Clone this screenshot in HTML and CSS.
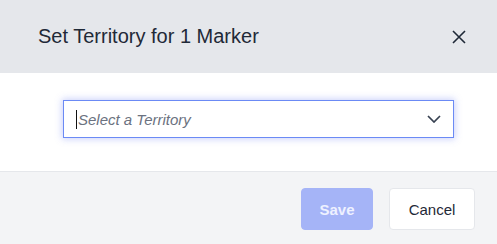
FILE: index.html
```html
<!DOCTYPE html>
<html>
<head>
<meta charset="utf-8">
<link rel="stylesheet" href="styles.css">
</head>
<body>
<div class="modal">
  <div class="modal-header">
    <h2 class="modal-title">Set Territory for 1 Marker</h2>
    <button class="close-btn" aria-label="Close">
      <svg width="14" height="14" viewBox="0 0 14 14"><path d="M1 1L13 13M13 1L1 13" stroke="#1f2937" stroke-width="1.6" fill="none"/></svg>
    </button>
  </div>
  <div class="modal-body">
    <div class="select">
      <span class="caret"></span>
      <span class="placeholder">Select a Territory</span>
      <svg class="chevron" width="14" height="8" viewBox="0 0 14 8"><path d="M1 1L7 7L13 1" stroke="#374151" stroke-width="1.7" fill="none"/></svg>
    </div>
  </div>
  <div class="modal-footer">
    <button class="btn btn-save">Save</button>
    <button class="btn btn-cancel">Cancel</button>
  </div>
</div>
</body>
</html>
```
FILE: styles.css
```css
html, body {
  margin: 0;
  padding: 0;
  background: #ffffff;
  font-family: "Liberation Sans", Arial, sans-serif;
}
.modal {
  width: 497px;
  height: 244px;
  display: flex;
  flex-direction: column;
}
.modal-header {
  height: 73px;
  box-sizing: border-box;
  background: #e5e7eb;
  display: flex;
  align-items: center;
  justify-content: space-between;
  padding: 0 31px 0 38px;
}
.modal-title {
  margin: 0;
  font-size: 20px;
  font-weight: normal;
  color: #1f2937;
}
.close-btn {
  border: none;
  background: transparent;
  padding: 0;
  width: 14px;
  height: 14px;
  display: flex;
}
.modal-body {
  padding: 27px 43px 33px 63px;
  border-bottom: 1px solid #e5e7eb;
}
.select {
  height: 38px;
  box-sizing: border-box;
  border: 1px solid #6b8af5;
  box-shadow: 0 0 7px 1px rgba(99, 120, 241, 0.35);
  background: #fff;
  display: flex;
  align-items: center;
  padding: 0 12px 0 12px;
}
.caret {
  width: 1px;
  height: 19px;
  background: #111;
  margin-right: 1px;
}
.placeholder {
  flex: 1;
  font-size: 15px;
  font-style: italic;
  color: #6b7280;
}
.chevron {
  display: block;
}
.modal-footer {
  flex: 1;
  background: #f3f4f6;
  display: flex;
  justify-content: flex-end;
  align-items: flex-start;
  gap: 16px;
  padding: 16px 22px 0 0;
}
.btn {
  height: 42px;
  box-sizing: border-box;
  border-radius: 4px;
  font-family: "Liberation Sans", Arial, sans-serif;
  font-size: 15px;
  padding: 0;
}
.btn-save {
  width: 72px;
  background: #a5b4f7;
  border: 1px solid #a5b4f7;
  color: #eef1ff;
  font-weight: bold;
}
.btn-cancel {
  width: 86px;
  background: #fff;
  border: 1px solid #e5e7eb;
  color: #1f2937;
}
```
